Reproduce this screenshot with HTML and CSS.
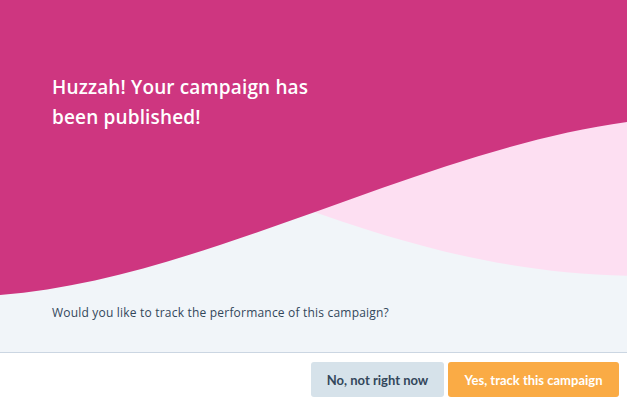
FILE: index.html
```html
<!DOCTYPE html>
<html>
<head>
<meta charset="utf-8">
<link rel="stylesheet" href="styles.css">
</head>
<body>
<div class="modal">
  <div class="hero">
    <svg class="waves" width="627" height="352" viewBox="0 0 627 352" preserveAspectRatio="none">
      <path d="M300,207 C420,250 520,275 640,276 L640,0 L300,0 Z" fill="#fddff2"/>
      <path d="M0,295 C200,280 420,150 627,122 L627,0 L0,0 Z" fill="#ce3680"/>
    </svg>
    <h1 class="title">Huzzah! Your campaign has<br>been published!</h1>
    <p class="question">Would you like to track the performance of this campaign?</p>
  </div>
  <div class="footer">
    <button class="btn btn-secondary">No, not right now</button>
    <button class="btn btn-primary">Yes, track this campaign</button>
  </div>
</div>
</body>
</html>
```
FILE: styles.css
```css
* { box-sizing: border-box; }
html, body { margin: 0; padding: 0; background: #ffffff; }
body { font-family: "Open Sans", Lato, sans-serif; color: #33475b; }
.modal { width: 627px; height: 405px; display: flex; flex-direction: column; }
.hero {
  position: relative;
  height: 353px;
  background: #f1f5f9;
  border-bottom: 1px solid #cbd6e2;
  display: flex;
  flex-direction: column;
  overflow: hidden;
}
.waves { position: absolute; left: 0; top: 0; }
.title {
  position: relative;
  margin: 0;
  padding: 72px 0 0 52px;
  font-size: 19px;
  line-height: 30px;
  font-weight: 600;
  letter-spacing: 0.15px;
  color: #ffffff;
}
.question {
  position: relative;
  margin: 0;
  padding: 172px 0 0 52px;
  font-size: 12px;
  line-height: 18px;
  letter-spacing: 0.2px;
  color: #33475b;
}
.footer {
  display: flex;
  justify-content: flex-end;
  gap: 4px;
  padding: 9px 8px 0 0;
}
.btn {
  height: 35px;
  border: none;
  border-radius: 3px;
  font-family: Lato, "Open Sans", sans-serif;
  font-size: 13px;
  font-weight: 700;
  padding: 0;
}
.btn-secondary { width: 133px; background: #d6e2ea; color: #33475b; }
.btn-primary { width: 171px; background: #faab45; color: #ffffff; }
```
